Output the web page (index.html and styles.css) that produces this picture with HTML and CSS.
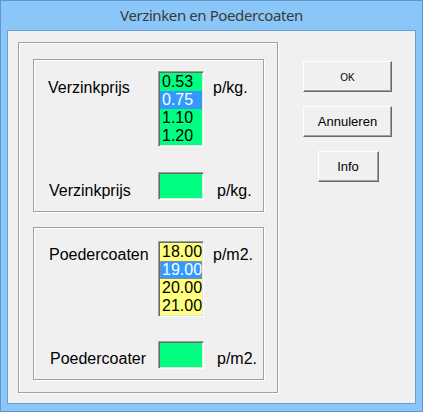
FILE: index.html
```html
<!DOCTYPE html>
<html>
<head>
<meta charset="utf-8">
<title>Verzinken en Poedercoaten</title>
<link rel="stylesheet" href="styles.css">
</head>
<body>
<div class="window">
  <div class="titlebar">Verzinken en Poedercoaten</div>
  <div class="client">
    <div class="outer-group">
      <div class="group g1">
        <div class="row row-list">
          <div class="label">Verzinkprijs</div>
          <div class="listbox green">
            <div class="item">0.53</div>
            <div class="item selected">0.75</div>
            <div class="item">1.10</div>
            <div class="item">1.20</div>
          </div>
          <div class="unit">p/kg.</div>
        </div>
        <div class="row row-edit">
          <div class="label">Verzinkprijs</div>
          <div class="edit"></div>
          <div class="unit">p/kg.</div>
        </div>
      </div>
      <div class="group g2">
        <div class="row row-list">
          <div class="label">Poedercoaten</div>
          <div class="listbox yellow">
            <div class="item">18.00</div>
            <div class="item selected focused">19.00</div>
            <div class="item">20.00</div>
            <div class="item">21.00</div>
          </div>
          <div class="unit">p/m2.</div>
        </div>
        <div class="row row-edit">
          <div class="label">Poedercoater</div>
          <div class="edit"></div>
          <div class="unit">p/m2.</div>
        </div>
      </div>
    </div>
    <div class="buttons">
      <div class="btn btn-wide btn-ok">OK</div>
      <div class="btn btn-wide">Annuleren</div>
      <div class="btn btn-narrow">Info</div>
    </div>
  </div>
</div>
</body>
</html>
```

FILE: styles.css
```css
html, body {
  margin: 0;
  padding: 0;
  background: #8ac6f8;
}

.window {
  box-sizing: border-box;
  width: 423px;
  height: 412px;
  background: #8ac6f8;
  border: 1px solid #5e96cf;
  padding: 0 6px 7px 6px;
  display: flex;
  flex-direction: column;
}

.titlebar {
  height: 29px;
  line-height: 29px;
  text-align: center;
  font-family: "Noto Sans", "Open Sans", sans-serif;
  font-size: 15px;
  color: #3a3a3a;
  letter-spacing: -0.4px;
}

.client {
  box-sizing: border-box;
  width: 409px;
  height: 374px;
  border: 1px solid #6a9ed3;
  background: #f0f0f0;
  padding: 11px 0 0 10px;
  display: flex;
  align-items: flex-start;
  font-family: "Liberation Sans", Arial, sans-serif;
  color: #000;
}

.outer-group,
.group {
  box-sizing: border-box;
  border: 1px solid #a0a0a0;
  box-shadow: inset 1px 1px 0 #ffffff, 1px 1px 0 #ffffff;
}

.outer-group {
  width: 260px;
  height: 351px;
  padding: 16px 0 0 14px;
  display: flex;
  flex-direction: column;
  gap: 15px;
}

.group {
  width: 231px;
  height: 153px;
  padding-left: 14px;
}

.g1 { padding-top: 11px; }
.g2 { padding-top: 13px; }

.row {
  display: flex;
  align-items: flex-start;
  font-size: 16px;
  line-height: 18px;
}

.label {
  width: 110px;
  flex: none;
}

.g1 .row-list .label,
.g1 .row-list .unit { margin-top: 8px; }

.g2 .row-list .label,
.g2 .row-list .unit { margin-top: 5px; }

.g2 .row-list .label { margin-left: 1px; width: 109px; }

.row-list .unit { margin-left: 9px; }

.row-edit .label { margin-left: 1px; width: 109px; }
.g2 .row-edit .label { margin-left: 2px; width: 108px; }

.g1 .row-edit { margin-top: 25px; }
.g2 .row-edit { margin-top: 24px; }

.g1 .row-edit .label,
.g1 .row-edit .unit { margin-top: 10px; }

.g2 .row-edit .label,
.g2 .row-edit .unit { margin-top: 9px; }

.row-edit .unit { margin-left: 13px; }

.listbox,
.edit {
  box-sizing: border-box;
  width: 46px;
  flex: none;
  border: 1px solid;
  border-color: #a0a0a0 #ffffff #ffffff #a0a0a0;
  box-shadow: inset 1px 1px 0 #696969, inset -1px -1px 0 #e3e3e3;
}

.listbox {
  height: 76px;
  padding: 1px;
}

.edit {
  height: 28px;
  background: #00ff80;
}

.green { background: #00ff80; }
.yellow { background: #ffff80; }

.item {
  box-sizing: border-box;
  height: 18px;
  line-height: 18px;
  padding-left: 2px;
  white-space: nowrap;
}

.item.selected {
  background: #3399ff;
  color: #ffffff;
}

.item.focused {
  border: 1px dotted #d08a2a;
  line-height: 16px;
  padding-left: 1px;
}

.buttons {
  margin-left: 25px;
  margin-top: 19px;
  width: 89px;
  display: flex;
  flex-direction: column;
  align-items: center;
  gap: 14px;
}

.btn {
  box-sizing: border-box;
  height: 31px;
  border: 1px solid;
  border-color: #ffffff #696969 #696969 #ffffff;
  box-shadow: inset -1px -1px 0 #a0a0a0;
  background: #f0f0f0;
  display: flex;
  align-items: center;
  justify-content: center;
  font-size: 13px;
  color: #000;
}

.btn-wide { width: 89px; }
.btn-narrow { width: 61px; margin-left: 1px; }

.btn-ok {
  font-size: 10px;
  padding-top: 1px;
}
```
